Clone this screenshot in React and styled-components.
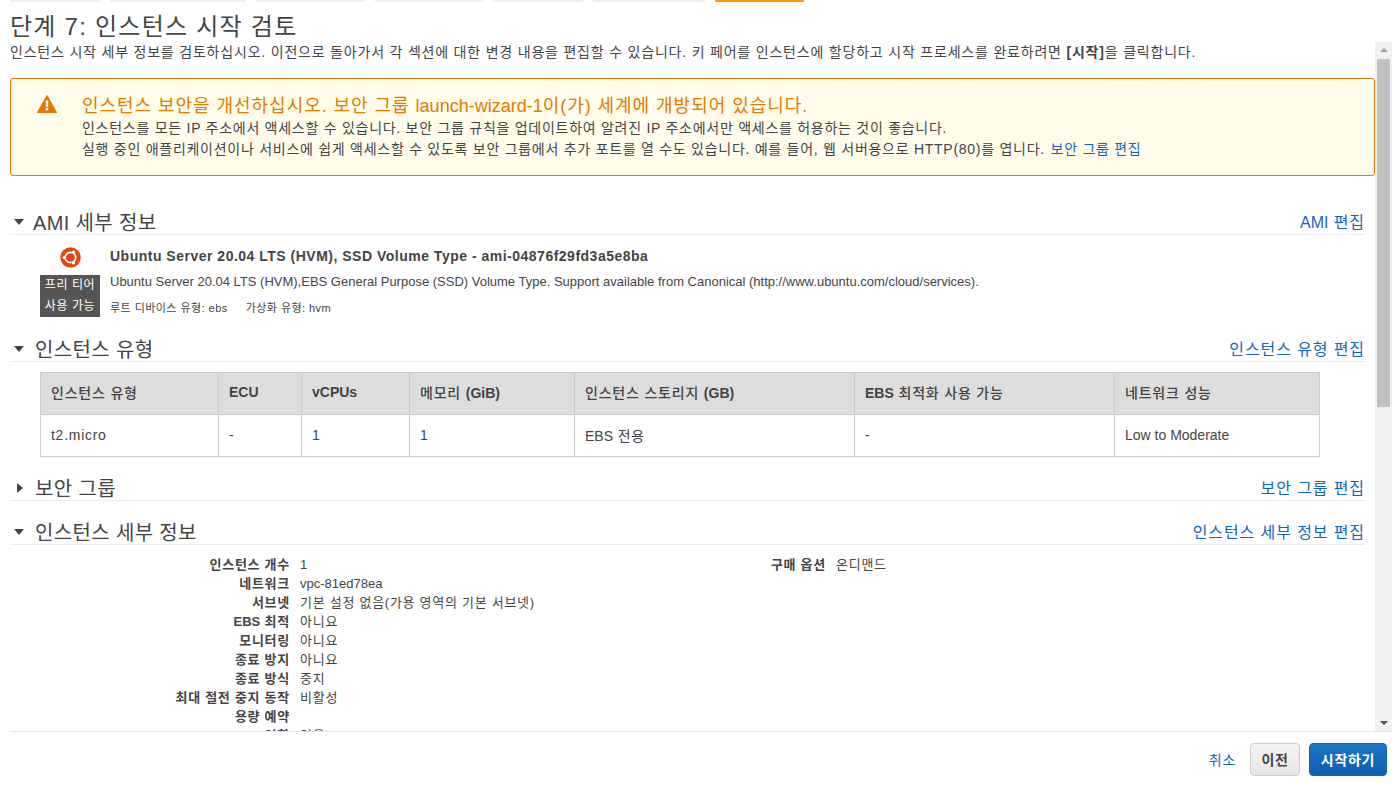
import React from 'react'
import styled, { createGlobalStyle } from 'styled-components'

const SANS = `"Liberation Sans", "Noto Sans CJK KR", sans-serif`
// hangul in the reference runs about 1em wide, Noto is narrower
const TRACK = '0.73px'

const GlobalStyle = createGlobalStyle`
  html, body {
    margin: 0;
    height: 100%;
    overflow: hidden;
    background: #fff;
  }
  body {
    font-family: ${SANS};
    font-size: 14px;
    color: #444;
  }
  #root {
    height: 100%;
  }
`

const Latin = styled.span`
  letter-spacing: 0;
`

const LatinBold = styled.b`
  font-weight: 700;
  letter-spacing: 0;
`

const TABS = [
  { width: 90 },
  { width: 136 },
  { width: 109 },
  { width: 108 },
  { width: 90 },
  { width: 112 },
  { width: 89, active: true },
]

const COLUMNS = [
  { key: 'type', label: <>인스턴스 유형</>, value: 't2.micro', width: 178 },
  { key: 'ecu', label: <LatinBold>ECU</LatinBold>, value: '-', width: 83 },
  { key: 'vcpu', label: <LatinBold>vCPUs</LatinBold>, value: '1', width: 108 },
  { key: 'mem', label: <>메모리 <LatinBold>(GiB)</LatinBold></>, value: '1', width: 165 },
  { key: 'store', label: <>인스턴스 스토리지 <LatinBold>(GB)</LatinBold></>, value: <><Latin>EBS</Latin> 전용</>, width: 280 },
  { key: 'ebs', label: <><LatinBold>EBS</LatinBold> 최적화 사용 가능</>, value: '-', width: 260 },
  { key: 'net', label: <>네트워크 성능</>, value: <Latin>Low to Moderate</Latin>, width: 205 },
]

const DETAILS = [
  ['인스턴스 개수', '1'],
  ['네트워크', <Latin>vpc-81ed78ea</Latin>],
  ['서브넷', '기본 설정 없음(가용 영역의 기본 서브넷)'],
  [<><Latin>EBS</Latin> 최적</>, '아니요'],
  ['모니터링', '아니요'],
  ['종료 방지', '아니요'],
  ['종료 방식', '중지'],
  ['최대 절전 중지 동작', '비활성'],
  ['용량 예약', ''],
  [<><Latin>IAM</Latin> 역할</>, '없음'],
]

const WarningIcon = () => (
  <svg width="20" height="18" viewBox="0 0 20 18">
    <path d="M10 0.5 L19.6 17.5 L0.4 17.5 Z" fill="#e07b00" stroke="#e07b00" strokeLinejoin="round" />
    <rect x="8.8" y="5.5" width="2.4" height="6.5" fill="#fffcea" />
    <rect x="8.8" y="13" width="2.4" height="2.4" fill="#fffcea" />
  </svg>
)

const UbuntuIcon = () => (
  <svg width="21" height="21" viewBox="0 0 21 21">
    <circle cx="10.5" cy="10.5" r="10.2" fill="#dd4814" />
    <circle cx="10.5" cy="10.5" r="5.2" fill="none" stroke="#fff" strokeWidth="1.8" />
    <g fill="#dd4814">
      <rect x="3" y="8.9" width="4" height="3.2" />
      <rect x="11.6" y="3" width="3.2" height="4" transform="rotate(-30 13.2 5)" />
      <rect x="11.6" y="14" width="3.2" height="4" transform="rotate(30 13.2 16)" />
    </g>
    <g fill="#fff">
      <circle cx="4.4" cy="10.5" r="1.7" />
      <circle cx="13.5" cy="5.2" r="1.7" />
      <circle cx="13.5" cy="15.8" r="1.7" />
    </g>
  </svg>
)

const Section = ({ title, link, collapsed, latinTitle, spacing, children }) => (
  <SectionBlock $spacing={spacing}>
    <SectionHeader>
      <Caret $collapsed={collapsed} $latinTitle={latinTitle} />
      <SectionTitle>{title}</SectionTitle>
      <EditLink>{link}</EditLink>
    </SectionHeader>
    {children}
  </SectionBlock>
)

const App = () => (
  <Page>
    <GlobalStyle />
    <TabBar>
      {TABS.map((tab, i) => (
        <Tab key={i} $width={tab.width} $active={tab.active} />
      ))}
    </TabBar>
    <Heading>단계 7: 인스턴스 시작 검토</Heading>
    <Body>
      <Scroller>
        <Intro>
          인스턴스 시작 세부 정보를 검토하십시오. 이전으로 돌아가서 각 섹션에 대한 변경 내용을 편집할 수 있습니다. 키 페어를 인스턴스에 할당하고 시작 프로세스를 완료하려면 <b>[시작]</b>을 클릭합니다.
        </Intro>
        <Alert>
          <AlertIcon>
            <WarningIcon />
          </AlertIcon>
          <div>
            <AlertTitle>인스턴스 보안을 개선하십시오. 보안 그룹 <Latin>launch-wizard-1</Latin>이(가) 세계에 개방되어 있습니다.</AlertTitle>
            <AlertLine>인스턴스를 모든 IP 주소에서 액세스할 수 있습니다. 보안 그룹 규칙을 업데이트하여 알려진 IP 주소에서만 액세스를 허용하는 것이 좋습니다.</AlertLine>
            <AlertLine>
              실행 중인 애플리케이션이나 서비스에 쉽게 액세스할 수 있도록 보안 그룹에서 추가 포트를 열 수도 있습니다. 예를 들어, 웹 서버용으로 HTTP(80)를 엽니다. <AlertLink>보안 그룹 편집</AlertLink>
            </AlertLine>
          </div>
        </Alert>

        <Section title="AMI 세부 정보" link={<><Latin>AMI</Latin> 편집</>} spacing={34} latinTitle>
          <AmiRow>
            <AmiBadge>
              <UbuntuIcon />
              <FreeTier>프리 티어<br />사용 가능</FreeTier>
            </AmiBadge>
            <AmiInfo>
              <AmiName>Ubuntu Server 20.04 LTS (HVM), SSD Volume Type - ami-04876f29fd3a5e8ba</AmiName>
              <AmiDesc>Ubuntu Server 20.04 LTS (HVM),EBS General Purpose (SSD) Volume Type. Support available from Canonical (http://www.ubuntu.com/cloud/services).</AmiDesc>
              <AmiMeta>
                <span>루트 디바이스 유형: ebs</span>
                <span>가상화 유형: hvm</span>
              </AmiMeta>
            </AmiInfo>
          </AmiRow>
        </Section>

        <Section title="인스턴스 유형" link="인스턴스 유형 편집" spacing={20}>
          <TypeTable>
            <thead>
              <tr>
                {COLUMNS.map(col => (
                  <HeadCell key={col.key} $width={col.width}>{col.label}</HeadCell>
                ))}
              </tr>
            </thead>
            <tbody>
              <tr>
                {COLUMNS.map(col => (
                  <ValueCell key={col.key}>{col.value}</ValueCell>
                ))}
              </tr>
            </tbody>
          </TypeTable>
        </Section>

        <Section title="보안 그룹" link="보안 그룹 편집" spacing={19} collapsed />

        <Section title="인스턴스 세부 정보" link="인스턴스 세부 정보 편집" spacing={19}>
          <DetailGrid>
            <DetailColumn>
              {DETAILS.map(([key, value], i) => (
                <DetailRow key={i}>
                  <DetailKey>{key}</DetailKey>
                  <DetailValue>{value}</DetailValue>
                </DetailRow>
              ))}
            </DetailColumn>
            <DetailColumn>
              <DetailRow>
                <PurchaseKey>구매 옵션</PurchaseKey>
                <DetailValue>온디맨드</DetailValue>
              </DetailRow>
            </DetailColumn>
          </DetailGrid>
        </Section>
      </Scroller>
      <ScrollTrack>
        <ScrollArrow />
        <ScrollThumb />
        <ScrollSpace />
        <ScrollArrow $down />
      </ScrollTrack>
    </Body>
    <Footer>
      <CancelLink>취소</CancelLink>
      <BackButton>이전</BackButton>
      <LaunchButton>시작하기</LaunchButton>
    </Footer>
  </Page>
)

export default App

const Page = styled.div`
  display: flex;
  flex-direction: column;
  height: 786px;
  overflow: hidden;
`

const TabBar = styled.div`
  display: flex;
  gap: 10px;
  height: 2px;
  padding-left: 10px;
`

const Tab = styled.div`
  width: ${p => p.$width}px;
  height: 2px;
  background: ${p => (p.$active ? '#f90' : '#eee')};
`

const Heading = styled.h1`
  margin: 0;
  height: 40px;
  padding: 10px 0 0 10px;
  box-sizing: border-box;
  font-size: 24px;
  line-height: 30px;
  font-weight: 400;
  letter-spacing: 1.25px;
  color: #444;
`

const Body = styled.div`
  display: flex;
  height: 689px;
  flex: none;
`

const Scroller = styled.div`
  flex: 1;
  min-width: 0;
  overflow: hidden;
  padding-left: 10px;
`

const Intro = styled.p`
  margin: 0;
  height: 36px;
  font-size: 14px;
  line-height: 20px;
  letter-spacing: 0.8px;
  white-space: nowrap;
  color: #444;
`

const Alert = styled.div`
  display: flex;
  box-sizing: border-box;
  height: 98px;
  padding: 16px 26px 14px;
  background: #fffcea;
  border: 1px solid #e07b00;
  border-radius: 3px;
`

const AlertIcon = styled.div`
  width: 45px;
`

const AlertTitle = styled.div`
  font-size: 18px;
  line-height: 23px;
  letter-spacing: 0.96px;
  color: #e07b00;
`

const AlertLine = styled.div`
  font-size: 14px;
  line-height: 21px;
  letter-spacing: ${TRACK};
  color: #444;
`

const AlertLink = styled.a`
  margin-left: 1px;
  color: #1166bb;
`

const SectionBlock = styled.section`
  margin: ${p => p.$spacing}px 10px 0 0;
`

const SectionHeader = styled.div`
  display: flex;
  align-items: center;
  height: 24px;
  border-bottom: 1px solid #eaeded;
`

const Caret = styled.span`
  display: block;
  flex: none;
  margin-left: ${p => (p.$collapsed ? '7px' : '4px')};
  margin-right: ${p => {
    if (p.$collapsed) return '12px'
    return p.$latinTitle ? '9px' : '11px'
  }};
  width: 0;
  height: 0;
  ${p =>
    p.$collapsed
      ? `border-top: 5px solid transparent;
         border-bottom: 5px solid transparent;
         border-left: 6px solid #444;`
      : `border-left: 5.5px solid transparent;
         border-right: 5.5px solid transparent;
         border-top: 6px solid #444;`}
`

const SectionTitle = styled.h2`
  flex: 1;
  margin: 0;
  padding-top: 2px;
  font-size: 20px;
  line-height: 24px;
  font-weight: 400;
  letter-spacing: 0.35px;
  color: #444;
`

const EditLink = styled.a`
  margin-bottom: 2px;
  font-size: 16px;
  letter-spacing: 0.9px;
  color: #1166bb;
`

const AmiRow = styled.div`
  display: flex;
  padding: 10px 0 0 30px;
`

const AmiBadge = styled.div`
  display: flex;
  flex-direction: column;
  align-items: center;
  width: 60px;
  flex: none;
  gap: 7px;
  padding-top: 2px;
`

const FreeTier = styled.div`
  width: 60px;
  background: #555;
  color: #fff;
  font-size: 12px;
  line-height: 21px;
  letter-spacing: 0.6px;
  text-align: center;
`

const AmiInfo = styled.div`
  margin-left: 10px;
`

const AmiName = styled.div`
  font-size: 14px;
  line-height: 22px;
  font-weight: 700;
  letter-spacing: 0.5px;
  color: #444;
`

const AmiDesc = styled.div`
  margin-top: 5px;
  font-size: 13px;
  line-height: 20px;
`

const AmiMeta = styled.div`
  display: flex;
  gap: 18px;
  margin-top: 8px;
  font-size: 11px;
  line-height: 16px;
  letter-spacing: 0.45px;
`

const TypeTable = styled.table`
  margin: 10px 0 0 30px;
  border-collapse: collapse;
  table-layout: fixed;
  font-size: 14px;
`

const HeadCell = styled.th`
  width: ${p => p.$width}px;
  height: 42px;
  padding: 0 10px 3px;
  box-sizing: border-box;
  background: #ddd;
  border: 1px solid #ccc;
  text-align: left;
  font-weight: 500;
  letter-spacing: 0.8px;
  color: #444;
`

const ValueCell = styled.td`
  height: 42px;
  padding: 0 10px 2px;
  box-sizing: border-box;
  border: 1px solid #ccc;
  letter-spacing: ${TRACK};
  color: #444;
`

const DetailGrid = styled.div`
  display: flex;
  padding-top: 10px;
`

const DetailColumn = styled.div`
  flex: none;
  width: 561px;
`

const DetailRow = styled.div`
  display: flex;
  gap: 10px;
  font-size: 13px;
  line-height: 19px;
  letter-spacing: ${TRACK};
`

const DetailKey = styled.div`
  flex: none;
  width: 280px;
  text-align: right;
  font-weight: 700;
  color: #444;
`

const PurchaseKey = styled.div`
  flex: none;
  width: 255px;
  text-align: right;
  font-weight: 700;
  color: #444;
`

const DetailValue = styled.div`
  color: #444;
`

const ScrollTrack = styled.div`
  display: flex;
  flex-direction: column;
  align-items: center;
  flex: none;
  width: 17px;
  background: #f1f1f1;
`

const ScrollArrow = styled.div`
  flex: none;
  width: 0;
  height: 0;
  margin: 6px 0;
  border-left: 4px solid transparent;
  border-right: 4px solid transparent;
  ${p =>
    p.$down
      ? 'border-top: 4px solid #505050;'
      : 'border-bottom: 4px solid #a3a3a3;'}
`

const ScrollThumb = styled.div`
  flex: none;
  width: 13px;
  height: 348px;
  margin-top: 1px;
  background: #c1c1c1;
`

const ScrollSpace = styled.div`
  flex: 1;
`

const Footer = styled.div`
  display: flex;
  flex: 1;
  align-items: center;
  justify-content: flex-end;
  margin-left: 10px;
  padding-right: 5px;
  border-top: 1px solid #e4e4e4;
`

const CancelLink = styled.a`
  margin-right: 14px;
  font-size: 14px;
  letter-spacing: ${TRACK};
  color: #1166bb;
`

const BackButton = styled.button`
  width: 50px;
  height: 33px;
  margin-right: 9px;
  padding: 0;
  font-family: ${SANS};
  font-size: 14px;
  font-weight: 700;
  letter-spacing: ${TRACK};
  color: #444;
  background: linear-gradient(#f4f4f4, #e6e6e6);
  border: 1px solid #ccc;
  border-radius: 4px;
`

const LaunchButton = styled.button`
  width: 78px;
  height: 33px;
  padding: 0;
  font-family: ${SANS};
  font-size: 14px;
  font-weight: 700;
  letter-spacing: ${TRACK};
  color: #fff;
  background: linear-gradient(#1a74c4, #105fae);
  border: 1px solid #1166bb;
  border-radius: 4px;
`
